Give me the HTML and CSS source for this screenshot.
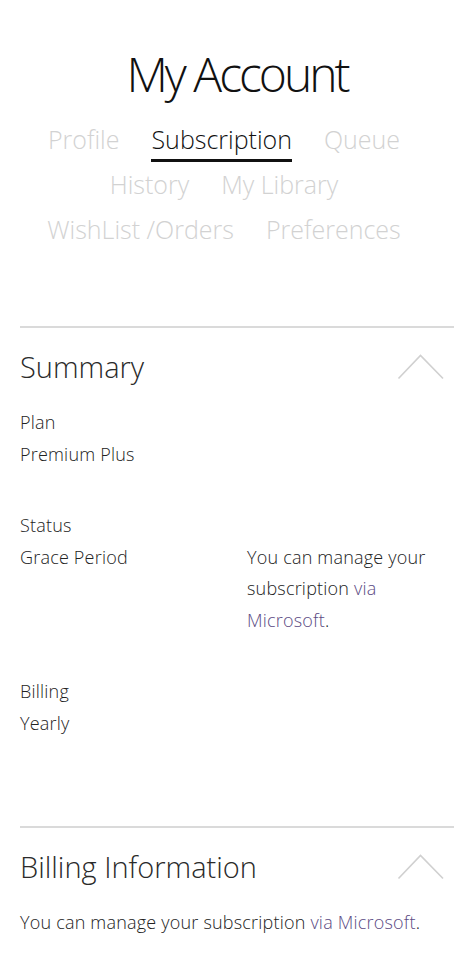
FILE: index.html
```html
<!DOCTYPE html>
<html lang="en">
<head>
<meta charset="utf-8">
<title>My Account</title>
<link rel="stylesheet" href="styles.css">
</head>
<body>
<main class="page">
  <h1 class="title">My Account</h1>
  <nav class="tabs">
    <a class="tab">Profile</a>
    <a class="tab tab-active">Subscription</a>
    <a class="tab">Queue</a>
    <a class="tab">History</a>
    <a class="tab">My Library</a>
    <a class="tab">WishList /Orders</a>
    <a class="tab">Preferences</a>
  </nav>

  <section class="panel">
    <header class="panel-head">
      <h2 class="panel-title">Summary</h2>
      <svg class="chevron" width="48" height="26" viewBox="0 0 48 26" aria-hidden="true"><polyline points="1.5,24.5 23.5,1.5 46,24.5" fill="none" stroke="#d0d0d0" stroke-width="1.6"/></svg>
    </header>
    <div class="panel-body">
      <div class="field">
        <div class="field-main">
          <div class="field-label">Plan</div>
          <div class="field-value">Premium Plus</div>
        </div>
      </div>
      <div class="field">
        <div class="field-main">
          <div class="field-label">Status</div>
          <div class="field-value">Grace Period</div>
        </div>
        <p class="field-note">You can manage your subscription <a class="link">via Microsoft</a>.</p>
      </div>
      <div class="field">
        <div class="field-main">
          <div class="field-label">Billing</div>
          <div class="field-value">Yearly</div>
        </div>
      </div>
    </div>
  </section>

  <section class="panel">
    <header class="panel-head">
      <h2 class="panel-title">Billing Information</h2>
      <svg class="chevron" width="48" height="26" viewBox="0 0 48 26" aria-hidden="true"><polyline points="1.5,24.5 23.5,1.5 46,24.5" fill="none" stroke="#d0d0d0" stroke-width="1.6"/></svg>
    </header>
    <p class="panel-text">You can manage your subscription <a class="link">via Microsoft</a>.</p>
  </section>
</main>
</body>
</html>
```

FILE: styles.css
```css
* {
  box-sizing: border-box;
}

html, body {
  margin: 0;
  padding: 0;
  background: #ffffff;
}

body {
  font-family: "Open Sans", "Noto Sans", Arial, sans-serif;
  color: #333333;
}

.page {
  padding: 44px 20px 0;
}

.title {
  margin: 0;
  font-size: 48px;
  font-weight: 300;
  line-height: 60px;
  letter-spacing: -3px;
  text-align: center;
  color: #111111;
}

.tabs {
  display: flex;
  flex-wrap: wrap;
  justify-content: center;
  column-gap: 32px;
  margin-top: 13px;
  padding-right: 26px;
}

.tab {
  font-size: 25px;
  font-weight: 300;
  line-height: 45px;
  color: #d2d2d2;
  white-space: nowrap;
}

.tab-active {
  color: #111111;
  box-shadow: inset 0 -3px 0 #111111;
}

.panel {
  border-top: 2px solid #dadada;
}

.tabs + .panel {
  margin-top: 74px;
}

.panel-head {
  display: flex;
  align-items: center;
  justify-content: space-between;
  padding-top: 19px;
  padding-right: 9px;
}

.panel-title {
  margin: 0;
  font-size: 29px;
  font-weight: 300;
  line-height: 40px;
  color: #2a2a2a;
}

.chevron {
  display: block;
}

.panel-body {
  display: flex;
  flex-direction: column;
  gap: 40px;
  padding-top: 20px;
  padding-bottom: 87px;
}

.field {
  display: grid;
  grid-template-columns: 227px 1fr;
  align-items: start;
}

.field-label,
.field-value,
.field-note,
.panel-text {
  font-size: 18px;
  font-weight: 300;
  line-height: 31.5px;
  letter-spacing: 0.2px;
  color: #222222;
}

.field-note {
  margin: 31.5px 0 0;
}

.panel-text {
  margin: 0;
  padding-top: 20px;
  padding-bottom: 20px;
}

.link {
  color: #5b4a83;
  text-decoration: none;
}
```
